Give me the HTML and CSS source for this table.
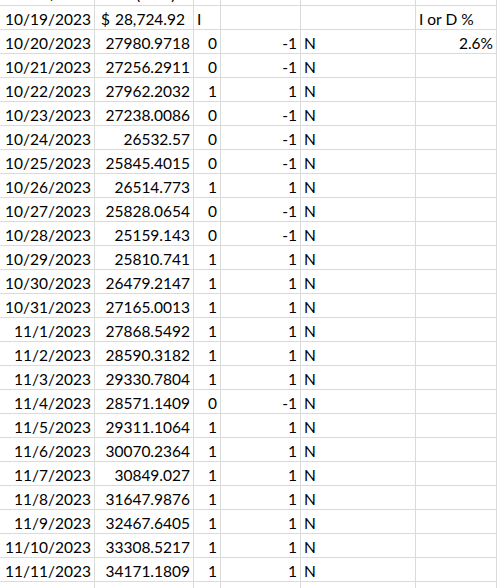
FILE: index.html
```html
<!DOCTYPE html>
<html lang="en">
<head>
<meta charset="utf-8">
<title>Sheet</title>
<link rel="stylesheet" href="styles.css">
</head>
<body>
<div class="sheet">
  <div class="c r head">Date/Time</div><div class="c l head">Price (USD)</div><div class="c"></div><div class="c"></div><div class="c"></div><div class="c"></div>

  <div class="c r">10/19/2023</div><div class="c acct"><span>$</span><span>28,724.92</span></div><div class="c l">I</div><div class="c"></div><div class="c"></div><div class="c l">I or D %</div>
  <div class="c r">10/20/2023</div><div class="c r">27980.9718</div><div class="c r">0</div><div class="c r">-1</div><div class="c l">N</div><div class="c r">2.6%</div>
  <div class="c r">10/21/2023</div><div class="c r">27256.2911</div><div class="c r">0</div><div class="c r">-1</div><div class="c l">N</div><div class="c"></div>
  <div class="c r">10/22/2023</div><div class="c r">27962.2032</div><div class="c r">1</div><div class="c r">1</div><div class="c l">N</div><div class="c"></div>
  <div class="c r">10/23/2023</div><div class="c r">27238.0086</div><div class="c r">0</div><div class="c r">-1</div><div class="c l">N</div><div class="c"></div>
  <div class="c r">10/24/2023</div><div class="c r">26532.57</div><div class="c r">0</div><div class="c r">-1</div><div class="c l">N</div><div class="c"></div>
  <div class="c r">10/25/2023</div><div class="c r">25845.4015</div><div class="c r">0</div><div class="c r">-1</div><div class="c l">N</div><div class="c"></div>
  <div class="c r">10/26/2023</div><div class="c r">26514.773</div><div class="c r">1</div><div class="c r">1</div><div class="c l">N</div><div class="c"></div>
  <div class="c r">10/27/2023</div><div class="c r">25828.0654</div><div class="c r">0</div><div class="c r">-1</div><div class="c l">N</div><div class="c"></div>
  <div class="c r">10/28/2023</div><div class="c r">25159.143</div><div class="c r">0</div><div class="c r">-1</div><div class="c l">N</div><div class="c"></div>
  <div class="c r">10/29/2023</div><div class="c r">25810.741</div><div class="c r">1</div><div class="c r">1</div><div class="c l">N</div><div class="c"></div>
  <div class="c r">10/30/2023</div><div class="c r">26479.2147</div><div class="c r">1</div><div class="c r">1</div><div class="c l">N</div><div class="c"></div>
  <div class="c r">10/31/2023</div><div class="c r">27165.0013</div><div class="c r">1</div><div class="c r">1</div><div class="c l">N</div><div class="c"></div>
  <div class="c r">11/1/2023</div><div class="c r">27868.5492</div><div class="c r">1</div><div class="c r">1</div><div class="c l">N</div><div class="c"></div>
  <div class="c r">11/2/2023</div><div class="c r">28590.3182</div><div class="c r">1</div><div class="c r">1</div><div class="c l">N</div><div class="c"></div>
  <div class="c r">11/3/2023</div><div class="c r">29330.7804</div><div class="c r">1</div><div class="c r">1</div><div class="c l">N</div><div class="c"></div>
  <div class="c r">11/4/2023</div><div class="c r">28571.1409</div><div class="c r">0</div><div class="c r">-1</div><div class="c l">N</div><div class="c"></div>
  <div class="c r">11/5/2023</div><div class="c r">29311.1064</div><div class="c r">1</div><div class="c r">1</div><div class="c l">N</div><div class="c"></div>
  <div class="c r">11/6/2023</div><div class="c r">30070.2364</div><div class="c r">1</div><div class="c r">1</div><div class="c l">N</div><div class="c"></div>
  <div class="c r">11/7/2023</div><div class="c r">30849.027</div><div class="c r">1</div><div class="c r">1</div><div class="c l">N</div><div class="c"></div>
  <div class="c r">11/8/2023</div><div class="c r">31647.9876</div><div class="c r">1</div><div class="c r">1</div><div class="c l">N</div><div class="c"></div>
  <div class="c r">11/9/2023</div><div class="c r">32467.6405</div><div class="c r">1</div><div class="c r">1</div><div class="c l">N</div><div class="c"></div>
  <div class="c r">11/10/2023</div><div class="c r">33308.5217</div><div class="c r">1</div><div class="c r">1</div><div class="c l">N</div><div class="c"></div>
  <div class="c r">11/11/2023</div><div class="c r">34171.1809</div><div class="c r">1</div><div class="c r">1</div><div class="c l">N</div><div class="c"></div>

  <div class="c r">11/12/2023</div><div class="c r">35055.0021</div><div class="c r">1</div><div class="c r">1</div><div class="c l">N</div><div class="c"></div>
</div>
</body>
</html>
```

FILE: styles.css
```css
html, body {
  margin: 0;
  padding: 0;
  background: #ffffff;
  overflow: hidden;
}

.sheet {
  display: grid;
  grid-template-columns: 94px 98px 26px 79px 114px 80px;
  grid-template-rows: 5px repeat(25, 23px);
  gap: 1px;
  padding-right: 1px;
  width: 496px;
  height: 588px;
  background: #dadada;
  font-family: Lato, "Open Sans", sans-serif;
  font-size: 15.5px;
  color: #000000;
  overflow: hidden;
}

.c {
  background: #ffffff;
  display: flex;
  align-items: flex-end;
  overflow: hidden;
  white-space: nowrap;
  line-height: 18px;
  padding: 0 3px 1px 3px;
  min-width: 0;
}

.r {
  justify-content: flex-end;
}

.l {
  justify-content: flex-start;
}

.head {
  padding-bottom: 2px;
}

.acct {
  justify-content: space-between;
  padding-left: 6px;
  padding-right: 8px;
}
```
